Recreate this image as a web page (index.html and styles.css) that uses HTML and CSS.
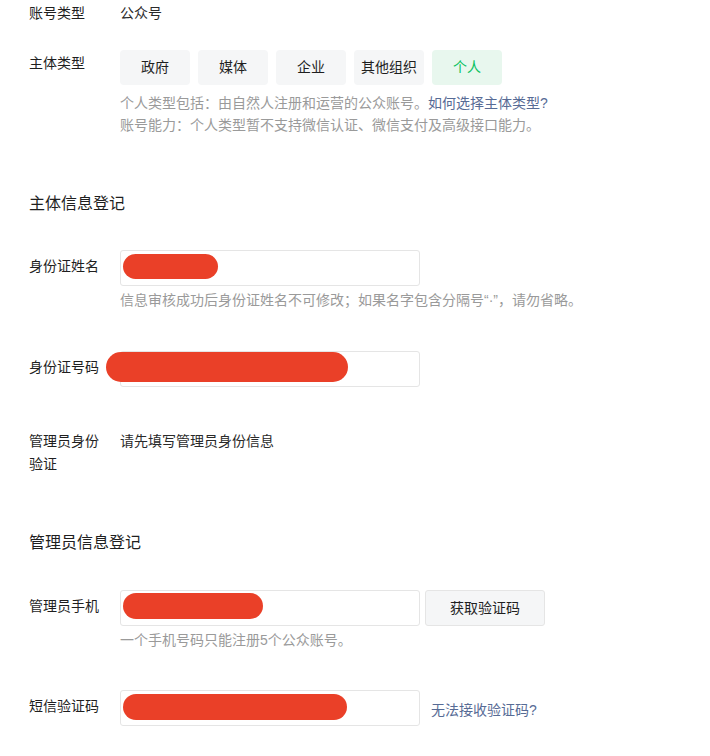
FILE: index.html
```html
<!DOCTYPE html>
<html lang="zh-CN">
<head>
<meta charset="utf-8">
<title>注册</title>
<link rel="stylesheet" href="styles.css">
</head>
<body>
<div class="page">
  <div class="row row-account">
    <div class="label">账号类型</div>
    <div class="value">公众号</div>
  </div>

  <div class="row row-type">
    <div class="label label-pad">主体类型</div>
    <div class="field">
      <div class="types">
        <span class="type">政府</span>
        <span class="type">媒体</span>
        <span class="type">企业</span>
        <span class="type">其他组织</span>
        <span class="type type-on">个人</span>
      </div>
      <div class="hint hint-type">个人类型包括：由自然人注册和运营的公众账号。<a class="link">如何选择主体类型?</a><br>账号能力：个人类型暂不支持微信认证、微信支付及高级接口能力。</div>
    </div>
  </div>

  <div class="section s1">主体信息登记</div>

  <div class="row row-name">
    <div class="label label-input">身份证姓名</div>
    <div class="field">
      <div class="input"><span class="mask mask-name"></span></div>
      <div class="hint">信息审核成功后身份证姓名不可修改；如果名字包含分隔号“·”，请勿省略。</div>
    </div>
  </div>

  <div class="row row-id">
    <div class="label label-input">身份证号码</div>
    <div class="field">
      <div class="input"><span class="mask mask-id"></span></div>
    </div>
  </div>

  <div class="row row-verify">
    <div class="label label-wrap">管理员身份验证</div>
    <div class="value value-wrap">请先填写管理员身份信息</div>
  </div>

  <div class="section s2">管理员信息登记</div>

  <div class="row row-phone">
    <div class="label label-input">管理员手机</div>
    <div class="field">
      <div class="inline">
        <div class="input"><span class="mask mask-phone"></span></div>
        <span class="btn">获取验证码</span>
      </div>
      <div class="hint">一个手机号码只能注册5个公众账号。</div>
    </div>
  </div>

  <div class="row row-sms">
    <div class="label label-input">短信验证码</div>
    <div class="field">
      <div class="inline">
        <div class="input"><span class="mask mask-sms"></span></div>
        <a class="link sms-link">无法接收验证码?</a>
      </div>
    </div>
  </div>
</div>
</body>
</html>
```

FILE: styles.css
```css
html, body {
  margin: 0;
  padding: 0;
  background: #ffffff;
}
body {
  font-family: "Liberation Sans", "Noto Sans CJK SC", sans-serif;
  font-size: 14px;
  color: #353535;
}
.page {
  padding: 2px 0 0 29px;
}
.row {
  display: flex;
  align-items: flex-start;
}
.label {
  width: 76px;
  margin-right: 15px;
  line-height: 22px;
  flex: none;
  color: #1f1f1f;
}
.value {
  line-height: 22px;
  color: #2a2a2a;
}
.label-pad { padding-top: 2px; }
.label-input { padding-top: 5px; }
.label-wrap { line-height: 23px; }
.value-wrap { line-height: 23px; }

.row-type { margin-top: 26px; }
.types {
  display: flex;
  gap: 8px;
}
.type {
  width: 70px;
  height: 35px;
  line-height: 35px;
  text-align: center;
  background: #f5f6f7;
  border-radius: 4px;
  color: #1f1f1f;
}
.type-on {
  background: #e8f7ee;
  color: #07c160;
}
.hint {
  color: #9a9a9a;
  line-height: 22px;
  margin-top: 3px;
}
.hint-type { margin-top: 7px; }
.link {
  color: #576b95;
  text-decoration: none;
}
.section {
  font-size: 16px;
  line-height: 24px;
  color: #1f1f1f;
}
.s1 { margin-top: 56px; }
.s2 { margin-top: 55px; }
.row-name { margin-top: 34px; }
.row-id { margin-top: 40px; }
.row-verify { margin-top: 43px; }
.row-phone { margin-top: 35px; }
.row-sms { margin-top: 39px; }

.input {
  position: relative;
  box-sizing: border-box;
  width: 300px;
  height: 36px;
  border: 1px solid #e5e5e5;
  border-radius: 3px;
  background: #ffffff;
  flex: none;
}
.mask {
  position: absolute;
  background: #ea4028;
  border-radius: 13px;
}
.mask-name { left: 2px; top: 3px; width: 95px; height: 25px; }
.mask-id { left: -15px; top: 0px; width: 242px; height: 30px; border-radius: 15px; }
.mask-phone { left: 2px; top: 2px; width: 140px; height: 26px; }
.mask-sms { left: 2px; top: 3px; width: 224px; height: 26px; }

.inline {
  display: flex;
  align-items: center;
}
.btn {
  box-sizing: border-box;
  margin-left: 5px;
  width: 120px;
  height: 36px;
  line-height: 34px;
  text-align: center;
  background: #f5f6f7;
  border: 1px solid #e5e5e5;
  border-radius: 3px;
  color: #1f1f1f;
}
.sms-link {
  margin-left: 11px;
  margin-top: 1px;
}
```
